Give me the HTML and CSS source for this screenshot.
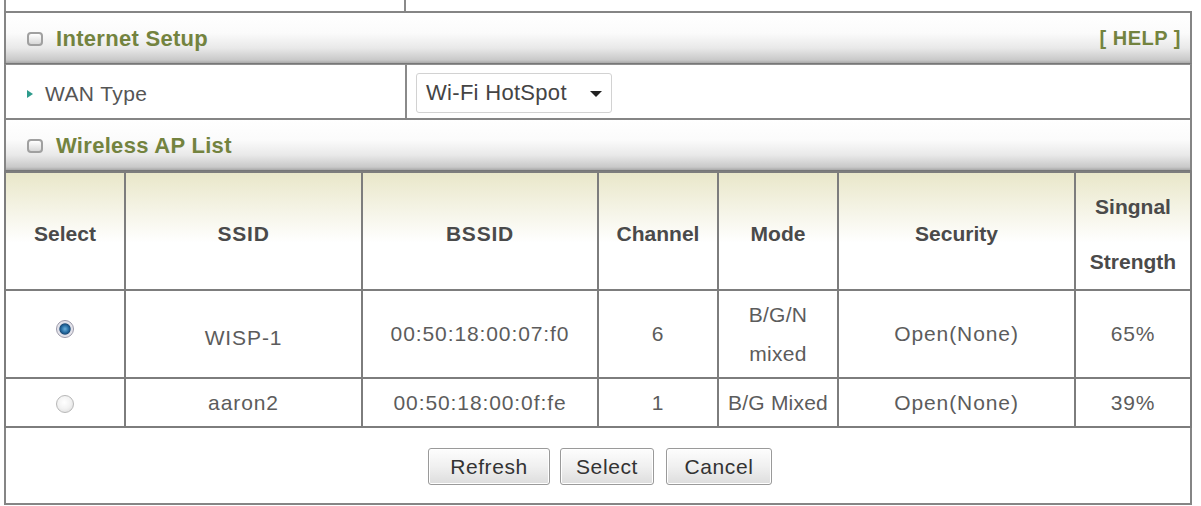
FILE: index.html
```html
<!DOCTYPE html>
<html lang="en">
<head>
<meta charset="utf-8">
<title>Internet Setup</title>
<link rel="stylesheet" href="styles.css">
</head>
<body>
<div class="panel">
  <div class="stub"><div class="stub-left"></div><div></div></div>

  <div class="bar">
    <span class="bar-icon"></span>
    <span class="bar-title">Internet Setup</span>
    <a class="help">[ HELP ]</a>
  </div>

  <div class="field-row">
    <div class="field-label"><span class="arrow"></span>WAN Type</div>
    <div class="field-value">
      <div class="select">Wi-Fi HotSpot<span class="caret"></span></div>
    </div>
  </div>

  <div class="bar">
    <span class="bar-icon"></span>
    <span class="bar-title">Wireless AP List</span>
  </div>

  <table class="ap-table">
    <colgroup>
      <col style="width:120px"><col style="width:237px"><col style="width:236px">
      <col style="width:120px"><col style="width:120px"><col style="width:237px"><col>
    </colgroup>
    <thead>
      <tr>
        <th>Select</th>
        <th class="spaced">SSID</th>
        <th class="spaced">BSSID</th>
        <th>Channel</th>
        <th>Mode</th>
        <th>Security</th>
        <th class="two-line">Singnal<br>Strength</th>
      </tr>
    </thead>
    <tbody>
      <tr class="row-tall">
        <td><span class="radio checked"></span></td>
        <td class="low">WISP-1</td>
        <td>00:50:18:00:07:f0</td>
        <td>6</td>
        <td class="wrap">B/G/N<br>mixed</td>
        <td>Open(None)</td>
        <td>65%</td>
      </tr>
      <tr class="row-short">
        <td><span class="radio"></span></td>
        <td>aaron2</td>
        <td>00:50:18:00:0f:fe</td>
        <td>1</td>
        <td>B/G Mixed</td>
        <td>Open(None)</td>
        <td>39%</td>
      </tr>
    </tbody>
  </table>

  <div class="actions">
    <button class="btn btn-refresh">Refresh</button>
    <button class="btn btn-select">Select</button>
    <button class="btn btn-cancel">Cancel</button>
  </div>
</div>
</body>
</html>
```

FILE: styles.css
```css
html, body {
  margin: 0;
  padding: 0;
  background: #ffffff;
}

body {
  font-family: "Liberation Sans", Arial, sans-serif;
  color: #555555;
}

.panel {
  margin-left: 4px;
  width: 1188px;
}

/* tail of the row above, cut off at the top */
.stub {
  display: grid;
  grid-template-columns: 402px 1fr;
  height: 11px;
}
.stub-left {
  border-left: 2px solid #8a8a8a;
  border-right: 2px solid #8a8a8a;
}

/* section title bars */
.bar {
  display: flex;
  align-items: center;
  height: 50px;
  padding: 0 9px 0 21px;
  border: 2px solid #858585;
  border-bottom: 1px solid #777777;
  background: linear-gradient(to bottom, #ffffff 0%, #fbfbfb 40%, #e9e9e9 70%, #c9c9c9 94%, #a9a9a9 100%);
}
.bar + .field-row { border-top: 1px solid #8f8f8f; }

.bar-icon {
  width: 12px;
  height: 10px;
  border: 2px solid #a0a0a0;
  border-radius: 4px;
  background: linear-gradient(#ffffff, #d8d8d8);
  margin-right: 13px;
  margin-top: 1px;
}
.bar-title {
  font-weight: bold;
  font-size: 22px;
  letter-spacing: 0.3px;
  color: #73833f;
  margin-top: 1px;
}
.help {
  margin-left: auto;
  font-weight: bold;
  font-size: 20px;
  color: #73833f;
  letter-spacing: 0.5px;
  margin-top: 1px;
}

/* WAN type row */
.field-row {
  display: grid;
  grid-template-columns: 401px 1fr;
  height: 53px;
  border-left: 2px solid #858585;
  border-right: 2px solid #858585;
}
.field-label {
  display: flex;
  align-items: center;
  font-size: 21px;
  letter-spacing: 0.4px;
  color: #555555;
  padding-left: 21px;
  padding-top: 5px;
  border-right: 2px solid #8a8a8a;
}
.arrow {
  width: 0;
  height: 0;
  border-top: 4px solid transparent;
  border-bottom: 4px solid transparent;
  border-left: 6px solid #2e9b8c;
  margin-right: 12px;
}
.field-value {
  display: flex;
  align-items: center;
  padding-left: 9px;
}
.select {
  display: flex;
  align-items: center;
  width: 196px;
  height: 40px;
  box-sizing: border-box;
  padding: 0 9px 0 9px;
  border: 1px solid #d2d2d2;
  border-radius: 3px;
  font-size: 22px;
  letter-spacing: 0.3px;
  color: #444444;
  margin-top: 2px;
}
.caret {
  margin-left: auto;
  width: 0;
  height: 0;
  border-left: 6px solid transparent;
  border-right: 6px solid transparent;
  border-top: 6px solid #222222;
  margin-top: 2px;
}

/* access point table */
.ap-table {
  width: 1188px;
  border-collapse: collapse;
  table-layout: fixed;
}
.ap-table th,
.ap-table td {
  border: 2px solid #7d7d7d;
  text-align: center;
  padding: 0;
}
.ap-table th {
  height: 110px;
  padding-top: 6px;
  font-size: 21px;
  font-weight: bold;
  color: #4a4a4a;
  background: linear-gradient(to bottom, #e9e7c9 0%, #f4f3e4 30%, #ffffff 60%, #ffffff 100%);
}
.ap-table th.spaced { letter-spacing: 0.8px; }
.ap-table th.two-line { line-height: 55px; }
.ap-table td {
  font-size: 21px;
  letter-spacing: 0.9px;
  color: #5c5c5c;
}
.row-tall td { height: 86px; line-height: 24px; }
.row-tall td.wrap { line-height: 39px; letter-spacing: 0.3px; }
.row-tall td.low { height: 78px; padding-top: 8px; }
.row-short td { height: 47px; }
.row-short td:nth-child(5) { letter-spacing: 0.2px; }

.radio {
  display: inline-block;
  width: 16px;
  height: 16px;
  border-radius: 50%;
  border: 1px solid #b8b8b8;
  background: radial-gradient(circle at 45% 40%, #ffffff 0%, #f2f2f2 50%, #d6d6d6 100%);
  vertical-align: middle;
}
.radio.checked {
  border-color: #9a98a8;
  background: radial-gradient(circle at 50% 50%, #6ab0dc 0%, #22689e 34%, #1c4d78 46%, #dcdce6 54%, #eeeef2 75%, #c6c4cf 100%);
}
.row-tall .radio { margin-bottom: 10px; }

/* button strip */
.actions {
  display: flex;
  justify-content: center;
  gap: 10px;
  height: 77px;
  padding: 20px 0 0 4px;
  box-sizing: border-box;
  border: 2px solid #858585;
  border-top: 0;
}
.btn {
  height: 37px;
  font-family: "Liberation Sans", Arial, sans-serif;
  font-size: 21px;
  letter-spacing: 0.6px;
  color: #333333;
  border: 1px solid #9a9a9a;
  border-radius: 3px;
  background: linear-gradient(to bottom, #fdfdfd 0%, #f0f0f0 50%, #dddddd 100%);
  box-shadow: inset 0 0 0 1px #ffffff;
}
.btn-refresh { width: 122px; }
.btn-select { width: 94px; }
.btn-cancel { width: 106px; margin-left: 2px; }
```
